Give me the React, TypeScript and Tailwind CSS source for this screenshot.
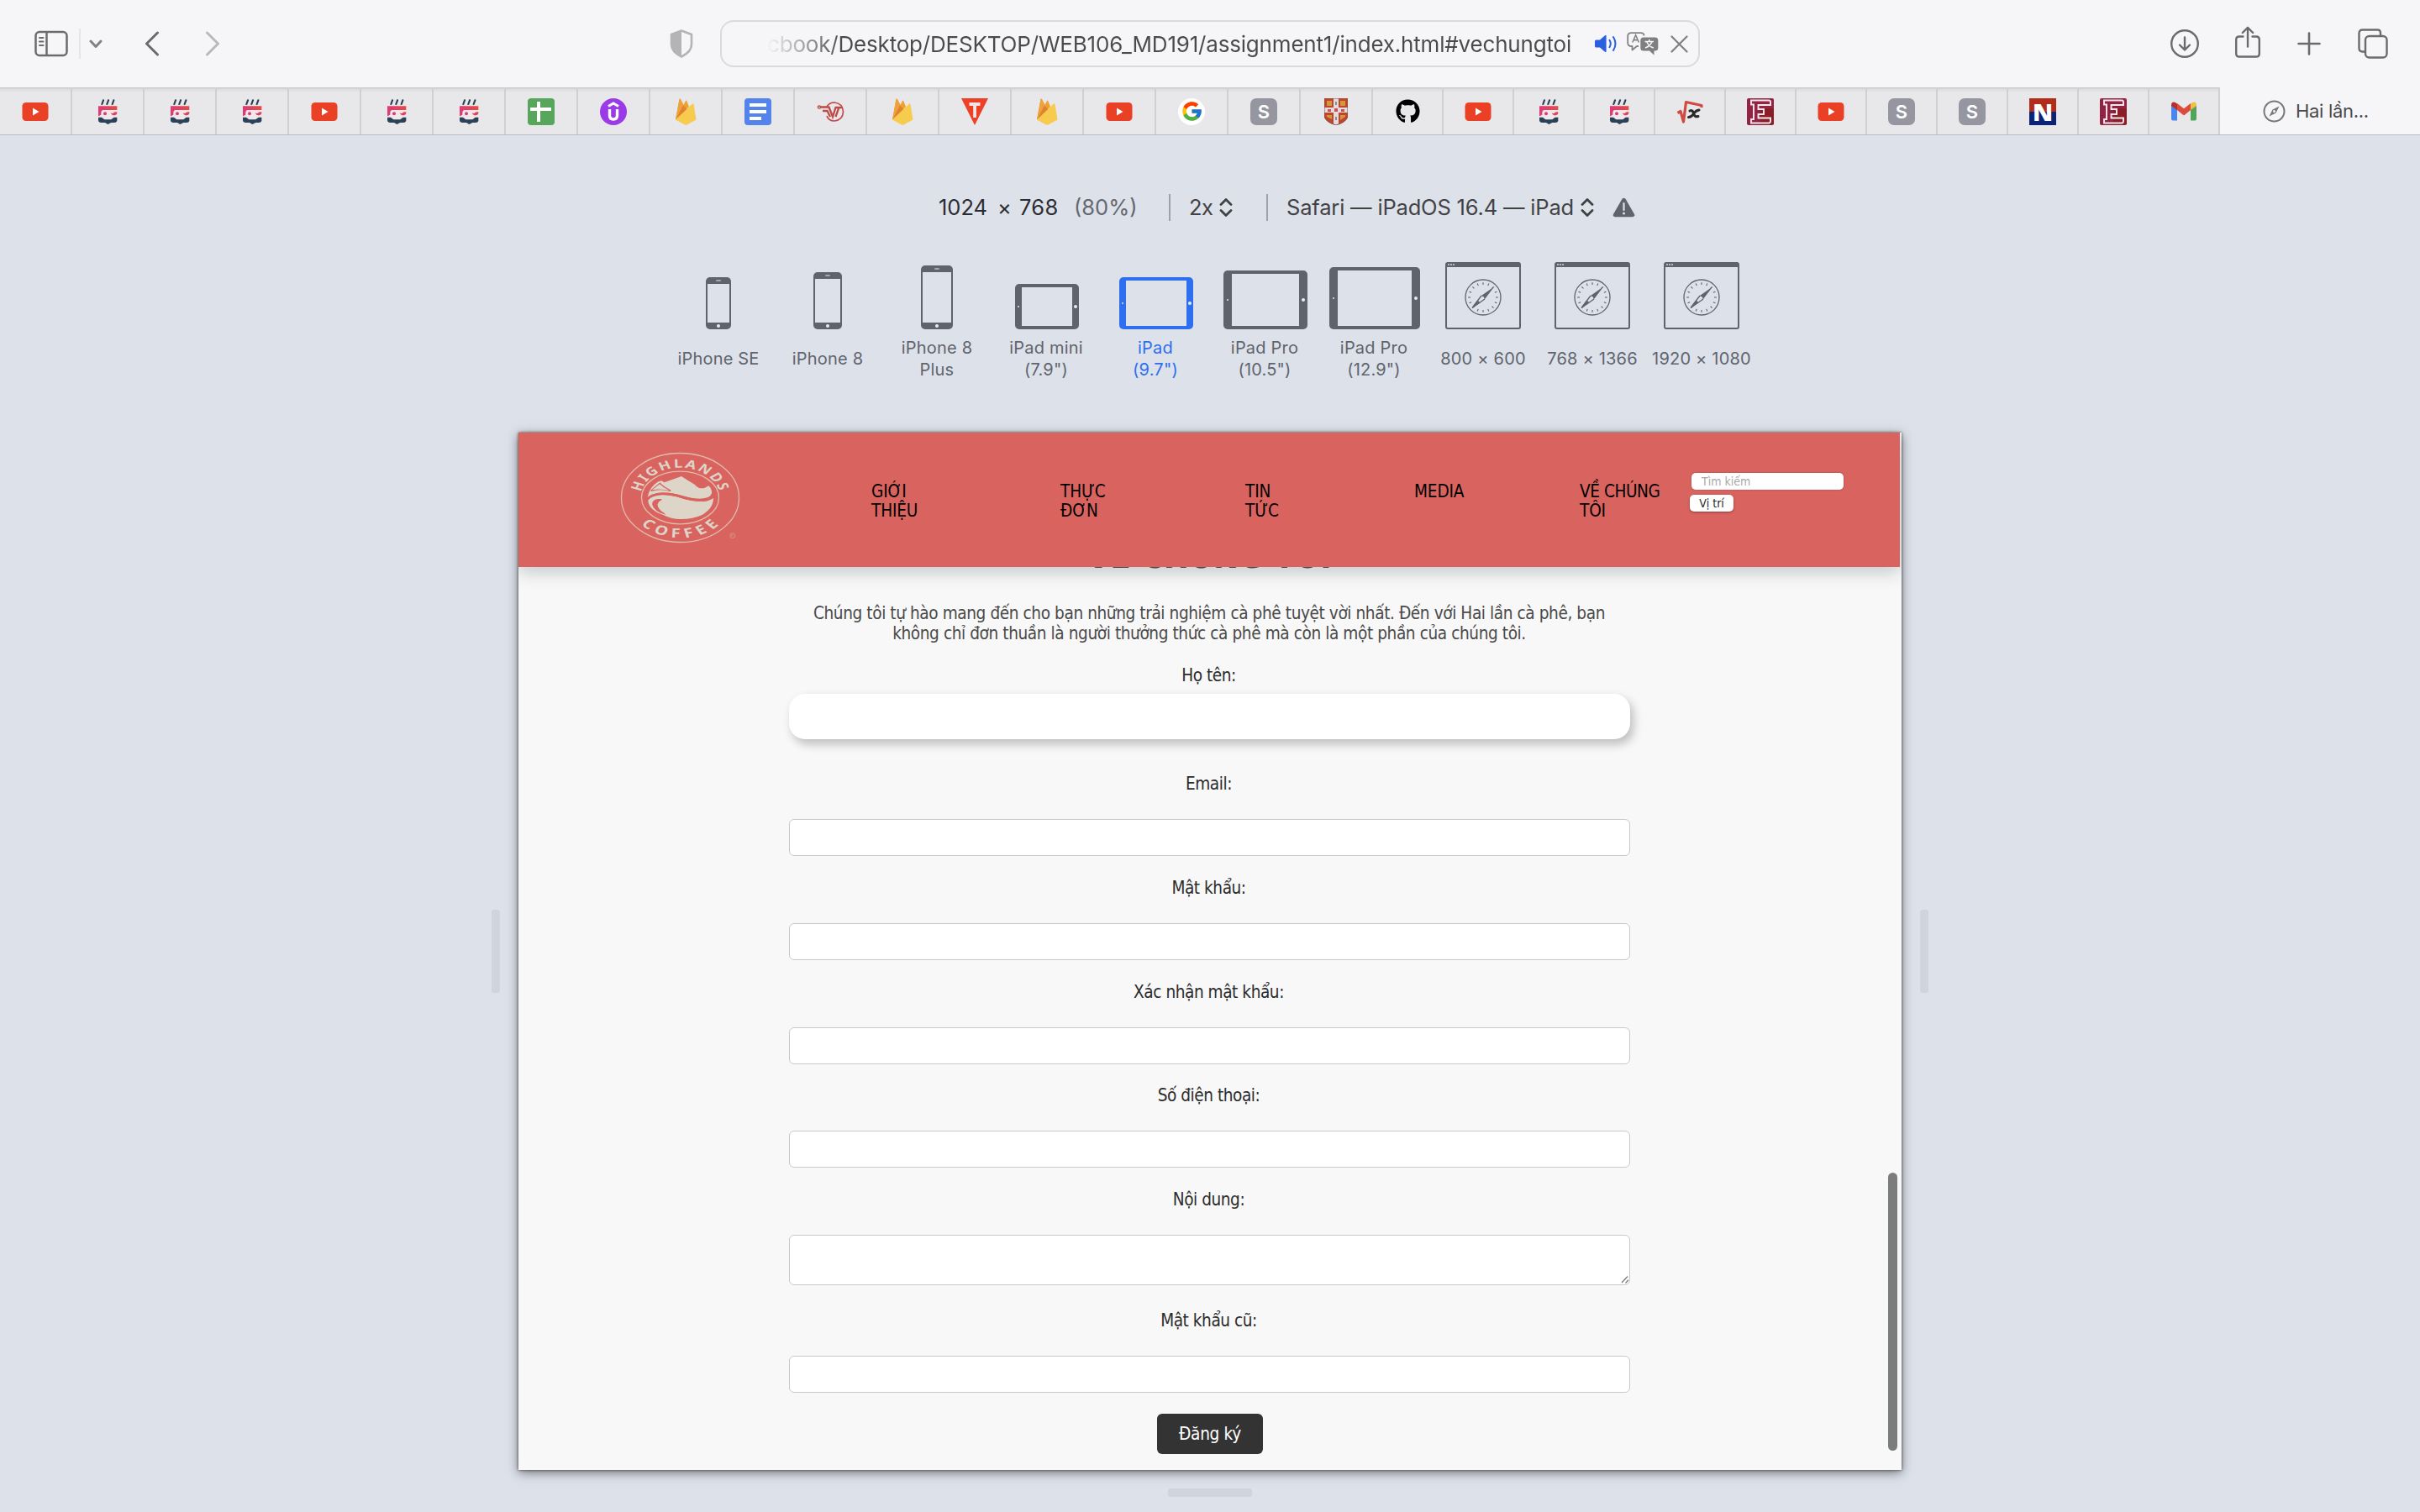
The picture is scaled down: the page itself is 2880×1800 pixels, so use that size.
import type { ReactNode } from "react";
import { FaGithub } from "react-icons/fa";
import { FcGoogle } from "react-icons/fc";

/* ---------- toolbar icons ---------- */

const SidebarIcon = () => (
  <svg width="40" height="32" viewBox="0 0 40 32" fill="none" stroke="#6b6b6e" strokeWidth="2.5">
    <rect x="1.5" y="2" width="37" height="28" rx="4.5" />
    <path d="M14.5 2v28" />
    <path d="M6 9h4.500M6 13.500h4.500M6 18h4.500" strokeWidth="2" strokeLinecap="round" />
  </svg>
);

const ShieldIcon = () => (
  <svg width="28" height="34" viewBox="0 0 28 34">
    <path d="M14 1.500 L26 6 V18 C26 25 20 29.500 14 32.500 C8 29.500 2 25 2 18 V6 Z" fill="none" stroke="#b4b4b7" strokeWidth="2.600" strokeLinejoin="round" />
    <path d="M14 1.500 L2 6 V18 C2 25 8 29.500 14 32.500 Z" fill="#b4b4b7" />
  </svg>
);

const AudioIcon = () => (
  <svg width="28" height="22" viewBox="0 0 28 22">
    <path d="M1 8 Q1 6.500 2.500 6.500 H7 L13 1.200 Q14.600 0.200 14.600 2 V20 Q14.600 21.800 13 20.800 L7 15.500 H2.500 Q1 15.500 1 14 Z" fill="#2a5fe0" />
    <path d="M18.500 6.800 Q21 11 18.500 15.200 M23 3 Q28 11 23 19" fill="none" stroke="#2a5fe0" strokeWidth="2" strokeLinecap="round" />
  </svg>
);

const TranslateIcon = () => (
  <svg width="38" height="28" viewBox="0 0 38 28">
    <path d="M14 17 H12 L6.500 21.500 V17 H5.500 Q1.200 17 1.200 13 V5 Q1.200 1.200 5.500 1.200 H16.500 Q20.500 1.200 20.500 4.500" fill="none" stroke="#838386" strokeWidth="1.800" strokeLinejoin="round" />
    <path d="M6.800 12.500 L10.600 3.800 L14.400 12.500 M8.200 9.600 H13" fill="none" stroke="#838386" strokeWidth="1.600" />
    <path d="M20 6.500 H33.500 Q37.300 6.500 37.300 10 V19 Q37.300 22.500 33.500 22.500 H32.500 V27.500 L27 22.500 H20 Q16.300 22.500 16.300 19 V10 Q16.300 6.500 20 6.500Z" fill="#7f7f82" />
    <path d="M21.500 11.500 H32 M26.800 9 V11.500 M30 11.500 Q28 17 22 19 M23.600 11.500 Q26 17 31.800 19" fill="none" stroke="#f6f6f8" strokeWidth="1.600" />
  </svg>
);

const DownloadIcon = () => (
  <svg width="36" height="36" viewBox="0 0 36 36" fill="none" stroke="#6b6b6e" strokeWidth="2.400" strokeLinecap="round" strokeLinejoin="round">
    <circle cx="18" cy="18" r="15.800" />
    <path d="M18 10.500v14.500M12 19.500l6 6 6-6" />
  </svg>
);

const ShareIcon = () => (
  <svg width="32" height="40" viewBox="0 0 32 40" fill="none" stroke="#6b6b6e" strokeWidth="2.400" strokeLinecap="round" strokeLinejoin="round">
    <path d="M10.500 13.500H6q-3.800 0-3.800 3.800v16.400q0 3.800 3.800 3.800h20q3.800 0 3.800-3.800V17.300q0-3.800-3.800-3.800h-4.500" />
    <path d="M16 25.500V3M9.800 9l6.200-6.200L22.200 9" />
  </svg>
);

const PlusIcon = () => (
  <svg width="28" height="28" viewBox="0 0 28 28" stroke="#6b6b6e" strokeWidth="2.600" strokeLinecap="round">
    <path d="M14 1.500v25M1.500 14h25" />
  </svg>
);

const TabsIcon = () => (
  <svg width="37" height="36" viewBox="0 0 37 36" fill="none" stroke="#6b6b6e" strokeWidth="2.400">
    <path d="M9.500 27.500H6.500q-4 0-4-4V5.500q0-4 4-4H24.500q3.500 0 3.500 4V8.500" />
    <rect x="10" y="9" width="25.500" height="25.500" rx="4.500" />
  </svg>
);

/* ---------- favicons ---------- */

const YouTube = () => (
  <svg width="32" height="32" viewBox="0 0 32 32">
    <rect x="0.500" y="5" width="31" height="22" rx="4.500" fill="#ea4025" />
    <path d="M13 11.500 L20.500 16 L13 20.500Z" fill="#fff" />
  </svg>
);

const Robot = () => (
  <svg width="24" height="30" viewBox="47 32 72 90">
    <defs>
      <linearGradient id="robot" gradientUnits="userSpaceOnUse" x1="50" x2="117" y1="0" y2="0">
        <stop offset="0" stopColor="#dd3a78" />
        <stop offset="1" stopColor="#e84a43" />
      </linearGradient>
    </defs>
    <path d="M68 36 L63 50 M86 36 L81 50 M105 36 L100 50" stroke="#2b4157" strokeWidth="6.500" strokeLinecap="round" />
    <path d="M56 70 H117 V96 L104 96 L96 103 H72 L64 96 H56Z" fill="#efe9ec" />
    <path d="M50 57 H117 V71 H66 Q60 72 60 80 V88 L50 93Z" fill="url(#robot)" />
    <circle cx="74" cy="84" r="6" fill="#dd3a78" />
    <path d="M94 80 q4 4 9 2 q4 -5 14 -4 q1 10 -8 12 q-12 1 -15 -10Z" fill="#e2435a" />
    <path d="M50 97 L62 97 L72 105 H96 L106 97 H117 V110 Q115 116 107 116 H96 L84 122 L74 116 H60 Q51 116 50 108Z" fill="#2b4157" />
  </svg>
);

const Sheet = () => (
  <div className="relative h-[32px] w-[32px] rounded-[4px] bg-[#58a65c]">
    <div className="absolute left-[3px] top-[11px] h-[4px] w-[25px] bg-white" />
    <div className="absolute left-[11px] top-[4px] h-[24px] w-[4px] bg-white" />
  </div>
);

const Udemy = () => (
  <svg width="32" height="32" viewBox="0 0 32 32">
    <circle cx="16" cy="16" r="16" fill="#9b3be8" />
    <path d="M10 9.500 L16 6 L22 9.500" fill="none" stroke="#fff" strokeWidth="3" />
    <path d="M11.500 13 V20.500 Q11.500 25 16 25 Q20.500 25 20.500 20.500 V13" fill="none" stroke="#fff" strokeWidth="3.400" />
  </svg>
);

const Firebase = () => (
  <svg width="26" height="32" viewBox="0 0 26 32">
    <path d="M1 25.500 L5.500 1 Q6 0 6.800 1 L10.500 8 L13 3 Q13.500 2.200 14.200 3 L17 10 L1 25.500Z" fill="#f0a030" />
    <path d="M1 25.500 L5.500 1 Q6 0 6.800 1 L14 14Z" fill="#eda23b" />
    <path d="M1 25.500 L10 8.500 L15.500 14Z" fill="#e08230" />
    <path d="M1 25.500 L21 6.500 Q22.200 5.800 22.500 7 L25.500 25.500 L14.500 31.500 Q13.200 32 12 31.500Z" fill="#f7cb4d" />
  </svg>
);

const Docs = () => (
  <div className="flex h-[32px] w-[32px] flex-col gap-[4px] rounded-[4px] bg-[#5383ec] pl-[6px] pt-[6px]">
    <div className="h-[4px] w-[20px] bg-white" />
    <div className="h-[4px] w-[20px] bg-white" />
    <div className="h-[4px] w-[14px] bg-white" />
  </div>
);

const Circuit = () => (
  <svg width="33" height="26" viewBox="0 0 33 26" fill="none" stroke="#bf4b48">
    <path d="M12 7 Q15 2 21 2 Q31 3 31.500 13 Q31 23 21 24 Q14 24 12 18" strokeWidth="1.700" />
    <circle cx="3" cy="7.500" r="1.600" strokeWidth="1.500" />
    <path d="M5 7.500 H14.500 L19 19 L22.500 8 H30 M7 12 H12.500 L16 19 M26 9 L22.500 19" strokeWidth="2.300" />
  </svg>
);

const TriangleT = () => (
  <svg width="32" height="32" viewBox="0 0 32 32">
    <path d="M0 0 H32 L16 32Z" fill="#ec4127" />
    <path d="M9.500 5 H22.500 V9 H18 V23 H14.200 V9 H9.500Z" fill="#f3e6e4" />
  </svg>
);

const Google = () => (
  <div className="flex h-[32px] w-[32px] items-center justify-center rounded-full bg-white">
    <FcGoogle size={27} />
  </div>
);

const LetterS = () => (
  <div className="flex h-[32px] w-[32px] items-center justify-center rounded-[7px] bg-[#9696a0] text-[22px] font-semibold leading-none text-white">
    S
  </div>
);

const Crest = () => (
  <svg width="28" height="32" viewBox="0 0 28 32">
    <path d="M0 0 H28 V20 Q28 28 14 32 Q0 28 0 20Z" fill="#c0442f" />
    <path d="M3 3 h6 v6 h-6z M19 3 h6 v6 h-6z M3 20 h6 v5 l-6 -3z M19 20 h6 v2 l-6 4z" fill="#cf9a35" />
    <path d="M11 0 h6 v32 h-6z M0 11 h28 v6 h-28z" fill="#e2dcdf" />
    <path d="M12 12 h4 v4 h-4z M4 13 h4 v3 h-4z M20 13 h4 v3 h-4z" fill="#d0504a" />
    <path d="M13 4 h2 v4 h-2z M13 22 h2 v4 h-2z" fill="#8f8a90" />
    <path d="M0 0 H28 V20 Q28 28 14 32 Q0 28 0 20Z" fill="none" stroke="#8c4a3c" strokeWidth="1" />
  </svg>
);

const Root = () => (
  <svg width="32" height="30" viewBox="0 0 32 30">
    <path d="M1.500 16.500 L5 14.500 L8.500 27 L11.500 3.500 L30 7.500 V10" fill="none" stroke="#cf4a40" strokeWidth="3.200" strokeLinejoin="round" />
    <path d="M16 14 Q19 12.500 20.500 16.500 Q21.500 22 26 20.500 M27 13 Q23 13.500 20.500 17.500 Q18 21.500 14.500 21.500" fill="none" stroke="#2a2a2a" strokeWidth="3" strokeLinecap="round" />
  </svg>
);

const LetterE = () => (
  <svg width="32" height="32" viewBox="0 0 32 32">
    <rect width="32" height="32" rx="2" fill="#932342" />
    <path d="M16 12 H32 V31 H16Z" fill="#8a1d26" />
    <path d="M5 2.500 H26 Q28 2.500 28 4.500 V8 H13.500 V13 H20 V19 H13.500 V23.500 H28 V27 Q28 29.500 26 29.500 H5 V25 H8 V7.500 H5Z" fill="none" stroke="#f5e9ec" strokeWidth="1.900" />
  </svg>
);

const LetterN = () => (
  <div className="flex h-[32px] w-[32px] items-center justify-center bg-[linear-gradient(#b12c1a_50%,#0b2478_50%)] font-['Open_Sans',sans-serif] text-[29px] font-extrabold leading-none text-white">
    N
  </div>
);

const Gmail = () => (
  <svg width="30" height="23" viewBox="0 0 30 23">
    <path d="M0 4 L7 9 V22.500 H2 Q0 22.500 0 20.500Z" fill="#4b85ee" />
    <path d="M30 4 L23 9 V22.500 H28 Q30 22.500 30 20.500Z" fill="#50a656" />
    <path d="M7 2 L15 8.300 L23 2 V10 L15 16.500 L7 10Z" fill="#dd4b3e" />
    <path d="M0 4 Q0 0.500 3 0.500 Q4.500 0.500 7 2.500 V10 L0 5Z" fill="#b8302a" />
    <path d="M30 4 Q30 0.500 27 0.500 Q25.500 0.500 23 2.500 V10 L30 5Z" fill="#f2bf42" />
  </svg>
);

const GitHub = () => <FaGithub size={29} color="#000" />;

const wideTabs = [YouTube, Robot, Robot, Robot, YouTube, Robot, Robot, Sheet, Udemy, Firebase, Docs, Circuit, Firebase, TriangleT, Firebase, YouTube, Google, LetterS, Crest];
const narrowTabs = [GitHub, YouTube, Robot, Robot, Root, LetterE, YouTube, LetterS, LetterS, LetterN, LetterE, Gmail];

const tabBase =
  "flex h-full shrink-0 items-center justify-center border-r-2 border-[#d0d0d3] bg-[linear-gradient(#c4c4c6,#dcdcde_2px,#e8e8ea_6px)] pt-px";

const Toolbar = () => (
  <div className="flex h-[104px] shrink-0 items-center bg-[#f6f6f8]">
    <div className="ml-[41px] flex items-center">
      <SidebarIcon />
    </div>
    <div className="ml-[13px] h-[36px] w-[2px] bg-[#e6e6e9]" />
    <svg className="ml-[10px]" width="16" height="11" viewBox="0 0 16 11" fill="none" stroke="#818188" strokeWidth="3" strokeLinecap="round" strokeLinejoin="round">
      <path d="M2 2 L8 8.500 L14 2" />
    </svg>
    <svg className="ml-[50px]" width="18" height="30" viewBox="0 0 18 30" fill="none" stroke="#6b6b6e" strokeWidth="3" strokeLinecap="round" strokeLinejoin="round">
      <path d="M15.500 2 L2.500 15 L15.500 28" />
    </svg>
    <svg className="ml-[54px]" width="18" height="30" viewBox="0 0 18 30" fill="none" stroke="#b9b9bb" strokeWidth="3" strokeLinecap="round" strokeLinejoin="round">
      <path d="M2.500 2 L15.500 15 L2.500 28" />
    </svg>
    <div className="ml-[535px]">
      <ShieldIcon />
    </div>
    <div className="ml-[32px] flex h-[56px] w-[1166px] items-center rounded-[16px] border-2 border-[#dadadc]">
      <span className="ml-[54px] mt-px w-[960px] whitespace-nowrap bg-[linear-gradient(90deg,#4a4a4c00_0,#4a4a4c_90px)] bg-clip-text text-[26px] leading-[40px] tracking-[-0.188px] text-transparent">
        cbook/Desktop/DESKTOP/WEB106_MD191/assignment1/index.html#vechungtoi
      </span>
      <div className="ml-[24px] flex items-center">
        <AudioIcon />
        <div className="ml-[11px]">
          <TranslateIcon />
        </div>
        <svg className="ml-[14px]" width="21" height="21" viewBox="0 0 21 21" stroke="#7f7f82" strokeWidth="2.200" strokeLinecap="round">
          <path d="M1.500 1.500 L19.500 19.500 M19.500 1.500 L1.500 19.500" />
        </svg>
      </div>
    </div>
    <div className="ml-[559px] flex items-center">
      <DownloadIcon />
      <div className="-mt-[5px] ml-[41px]">
        <ShareIcon />
      </div>
      <div className="ml-[43px]">
        <PlusIcon />
      </div>
      <div className="ml-[43px]">
        <TabsIcon />
      </div>
    </div>
  </div>
);

const TabBar = () => (
  <div className="flex h-[57px] shrink-0 border-b border-[#b7bcc6] bg-[#f6f6f8]">
    {wideTabs.map((Icon, i) => (
      <div key={i} className={`${tabBase} w-[86px]`}>
        <Icon />
      </div>
    ))}
    {narrowTabs.map((Icon, i) => (
      <div key={i} className={`${tabBase} w-[84px]`}>
        <Icon />
      </div>
    ))}
    <div className="flex items-center pl-[51px]">
      <svg width="27" height="27" viewBox="0 0 27 27">
        <circle cx="13.500" cy="13.500" r="12" fill="none" stroke="#77777a" strokeWidth="2" />
        <path d="M19.500 7.500 L15.500 15.500 L7.500 19.500 L11.500 11.500Z" fill="#77777a" />
        <circle cx="13.500" cy="13.500" r="1.500" fill="#f6f6f8" />
      </svg>
      <span className="ml-[12px] mt-px text-[22px] tracking-[-0.3px] text-[#4a4a4c]">Hai lần...</span>
    </div>
  </div>
);

/* ---------- responsive design mode bar ---------- */

const UpDown = () => (
  <svg width="16" height="24" viewBox="0 0 16 24" fill="none" stroke="#414143" strokeWidth="2.800" strokeLinecap="round" strokeLinejoin="round">
    <path d="M2 8.500 L8 2.500 L14 8.500 M2 15.500 L8 21.500 L14 15.500" />
  </svg>
);

const DimensionBar = () => (
  <div className="mt-[66px] flex h-[40px] items-center pl-[1117px] text-[25.5px] text-[#424245]">
    <span className="w-[70px] text-[#2b2c31]">1024</span>
    <span className="w-[26px] text-[#2b2c31]">×</span>
    <span className="w-[65px] tracking-[0.3px] text-[#2b2c31]">768</span>
    <span className="w-[113px] text-[25.5px] text-[#64676f]">(80%)</span>
    <div className="h-[32px] w-[2px] bg-[#9ea2ab]" />
    <span className="ml-[22px] w-[36px] tracking-[-0.5px]">2x</span>
    <UpDown />
    <div className="ml-[40px] h-[32px] w-[2px] bg-[#9ea2ab]" />
    <span className="ml-[22px] w-[350px] whitespace-nowrap tracking-[-0.18px]">Safari — iPadOS 16.4 — iPad</span>
    <UpDown />
    <svg className="ml-[22px]" width="27" height="24" viewBox="0 0 27 24">
      <path d="M11.500 1.800 Q13.500 -0.500 15.500 1.800 L26 20 Q27 23 24 23.300 H3 Q0 23 1 20Z" fill="#5f636c" />
      <path d="M13.500 7 V15" stroke="#dde1ea" strokeWidth="2.200" strokeLinecap="round" />
      <circle cx="13.500" cy="19" r="1.500" fill="#dde1ea" />
    </svg>
  </div>
);

const Phone = ({ size }: { size: string }) => (
  <div className={`flex flex-col items-center rounded-[5px] bg-[#5f636c] px-[2px] ${size}`}>
    <div className="flex h-[8px] items-center">
      <div className="h-[2px] w-[6px] rounded-full bg-[#a4a8b0]" />
    </div>
    <div className="w-full flex-1 bg-[#dde1ea]" />
    <div className="flex h-[8px] items-center">
      <div className="h-[4px] w-[4px] rounded-full bg-[#e8ebf2]" />
    </div>
  </div>
);

const Tablet = ({ size, color, side }: { size: string; color: string; side: string }) => (
  <div className={`ml-px flex rounded-[5px] py-[4px] ${size} ${color}`}>
    <div className={`flex items-center justify-center ${side}`}>
      <div className="h-[2px] w-[2px] bg-[#c2c6cf]" />
    </div>
    <div className="flex-1 bg-[#dde1ea]" />
    <div className={`flex items-center justify-center ${side}`}>
      <div className="h-[4px] w-[4px] rounded-full bg-[#e8ebf2]" />
    </div>
  </div>
);

const ticks = Array.from({ length: 16 }, (_, i) => i * 22.5);

const BrowserWindow = () => (
  <div className="flex h-[80px] w-[90px] flex-col rounded-[3px] border-2 border-t-0 border-[#5f636c]">
    <div className="flex h-[6px] items-center gap-[1px] bg-[#5f636c] pl-px">
      <div className="h-[2px] w-[2px] bg-[#b4b8c0]" />
      <div className="h-[2px] w-[2px] bg-[#b4b8c0]" />
      <div className="h-[2px] w-[2px] bg-[#b4b8c0]" />
    </div>
    <div className="flex flex-1 items-center justify-center">
      <svg width="44" height="44" viewBox="0 0 44 44" stroke="#5f636c">
        <circle cx="22" cy="22" r="21" fill="none" strokeWidth="1.300" />
        {ticks.map((a) => (
          <path key={a} d="M22 4.200 V7" strokeWidth="1.100" transform={`rotate(${a} 22 22)`} />
        ))}
        <path d="M35.500 9 L20 20 L24 24Z" fill="#5f636c" stroke="none" />
        <path d="M20 20 L9 34.500 L24 24" fill="none" strokeWidth="1.300" />
        <path d="M9 34.500 L15.500 25.500 L18.500 28.200Z" fill="#5f636c" stroke="none" />
        <circle cx="21.800" cy="22.200" r="1.300" fill="#dde1ea" stroke="none" />
      </svg>
    </div>
  </div>
);

const Device = ({ icon, lines, active }: { icon: ReactNode; lines: string[]; active?: boolean }) => (
  <div className={`flex w-[130px] flex-col items-center ${active ? "text-[#2d6fee]" : "text-[#60646d]"}`}>
    <div className="flex h-[82px] items-end">{icon}</div>
    <div className="mt-[9px] flex h-[52px] flex-col items-center justify-center text-[20px] leading-[26px] tracking-[0.2px]">
      {lines.map((line) => (
        <span key={line} className="whitespace-nowrap">{line}</span>
      ))}
    </div>
  </div>
);

const DeviceBar = () => (
  <div className="mt-[43px] flex pl-[790px]">
    <Device icon={<Phone size="h-[62px] w-[30px]" />} lines={["iPhone SE"]} />
    <Device icon={<Phone size="h-[68px] w-[34px]" />} lines={["iPhone 8"]} />
    <Device icon={<Phone size="h-[76px] w-[38px]" />} lines={["iPhone 8", "Plus"]} />
    <Device icon={<Tablet size="h-[54px] w-[76px]" side="w-[8px]" color="bg-[#5f636c]" />} lines={["iPad mini", '(7.9")']} />
    <Device active icon={<Tablet size="h-[62px] w-[88px]" side="w-[8px]" color="bg-[#2d6fee]" />} lines={["iPad", '(9.7")']} />
    <Device icon={<Tablet size="h-[70px] w-[100px]" side="w-[10px]" color="bg-[#5f636c]" />} lines={["iPad Pro", '(10.5")']} />
    <Device icon={<Tablet size="h-[74px] w-[108px]" side="w-[10px]" color="bg-[#5f636c]" />} lines={["iPad Pro", '(12.9")']} />
    <Device icon={<BrowserWindow />} lines={["800 × 600"]} />
    <Device icon={<BrowserWindow />} lines={["768 × 1366"]} />
    <Device icon={<BrowserWindow />} lines={["1920 × 1080"]} />
  </div>
);

/* ---------- the web page inside the viewport ---------- */

const Logo = () => (
  <svg width="160" height="125" viewBox="0 0 480 375" className="shrink-0">
    <defs>
      <path id="arc-top" d="M-106 18 A107.500 107.500 0 1 1 106 18" />
      <path id="arc-bottom" d="M-143 0 A143 143 0 0 0 143 0" />
    </defs>
    <ellipse cx="238.500" cy="187.500" rx="210" ry="159" fill="none" stroke="#e3b9ac" strokeWidth="4" />
    <ellipse cx="238.500" cy="187.500" rx="138" ry="94" fill="none" stroke="#e3b9ac" strokeWidth="4" />
    <g transform="translate(238.500 187.500) scale(1.320 1)" fill="#ddd5c8" fontFamily="'Noto Sans', sans-serif" fontWeight="700">
      <text fontSize="42" letterSpacing="5">
        <textPath href="#arc-top" startOffset="50%" textAnchor="middle">HIGHLANDS</textPath>
      </text>
      <text fontSize="46" letterSpacing="14">
        <textPath href="#arc-bottom" startOffset="51.5%" textAnchor="middle">COFFEE</textPath>
      </text>
    </g>
    <g fill="#ddd5c8">
      <path d="M122 186 Q128 150 160 130 L172 127 L182 133 L243 111 Q262 124 290 140 Q305 158 325 153 L340 145 Q352 155 351 172 Q345 188 322 190 Q290 194 245 180 Q190 164 150 174 Q132 178 122 186Z" />
      <path d="M124 200 Q124 182 150 179 Q190 172 240 188 Q290 204 330 200 Q350 196 357 187 Q358 225 318 248 Q285 264 240 264 Q205 264 180 250 Q128 232 124 200Z" />
    </g>
    <g fill="none" stroke="#d9635f">
      <path d="M134 163 L166 137 Q178 150 204 163 Q166 152 134 163" strokeWidth="5" />
      <path d="M172 194 Q138 190 140 212 Q146 236 184 246 Q156 228 156 212 Q158 200 172 194Z" fill="#d9635f" strokeWidth="3" />
      <path d="M122 192 Q134 178 165 174 Q200 171 244 185 Q292 200 330 195 Q348 191 357 182" strokeWidth="9" />
    </g>
    <path d="M138 160 L165 139 Q178 152 200 162 Q168 154 138 160Z" fill="#ddd5c8" />
    <circle cx="425" cy="323" r="9" fill="none" stroke="#d99a90" strokeWidth="2.500" />
    <text x="420" y="328" fontSize="13" fill="#d99a90">R</text>
  </svg>
);

const navItems: [string, string[]][] = [
  ["w-[225px]", ["GIỚI", "THIỆU"]],
  ["w-[220px]", ["THỰC", "ĐƠN"]],
  ["w-[201px]", ["TIN", "TỨC"]],
  ["w-[197px]", ["MEDIA"]],
  ["w-[131px]", ["VỀ CHÚNG", "TÔI"]],
];

const SiteHeader = () => (
  <header className="relative z-10 flex h-[160px] w-[1644px] shrink-0 bg-[#d9635f] shadow-[0_6px_20px_rgba(0,30,30,0.22)]">
    <div className="ml-[113px] mt-[15px] w-[307px]">
      <Logo />
    </div>
    <nav className="mt-[58.5px] flex text-[20.6px] leading-[23.6px] tracking-[-0.15px] text-black">
      {navItems.map(([width, lines]) => (
        <a key={lines[0]} className={`flex flex-col ${width}`}>
          {lines.map((line) => (
            <span key={line} className={`whitespace-nowrap ${line === "VỀ CHÚNG" ? "tracking-[-0.45px]" : ""}`}>{line}</span>
          ))}
        </a>
      ))}
    </nav>
    <div className="mt-[48px] flex flex-col items-start text-[14px] leading-[20px]">
      <div className="ml-[2px] h-[20px] w-[181px] rounded-[5px] bg-white pl-[12px] leading-[21px] text-[#a9a9a9] shadow-[0_0_2px_rgba(0,0,0,0.3)]">
        Tìm kiếm
      </div>
      <button className="mt-[6px] h-[20px] w-[52px] rounded-[5px] bg-white text-center leading-[21px] text-[#262626] shadow-[0_1px_3px_rgba(0,0,0,0.35)]">
        Vị trí
      </button>
    </div>
  </header>
);

const Label = ({ children, className }: { children: ReactNode; className: string }) => (
  <label className={`block h-[24px] pr-[2px] text-center leading-[24px] tracking-[-0.45px] text-[#2c2c2c] ${className}`}>{children}</label>
);

const inputBase = "mt-[30px] w-full rounded-[6px] border-[1.5px] border-[#c9c9c9] bg-white";

const SignUpForm = () => (
  <div className="ml-[322px] flex w-[1001px] flex-col">
    <Label className="mt-[25.4px]">Họ tên:</Label>
    <div className="mt-[10px] h-[54px] rounded-[19px] bg-white shadow-[4px_6px_12px_rgba(0,0,0,0.24)]" />
    <Label className="mt-[41px]">Email:</Label>
    <div className={`h-[44px] ${inputBase}`} />
    {["Mật khẩu:", "Xác nhận mật khẩu:", "Số điện thoại:"].map((text) => (
      <div key={text}>
        <Label className="mt-[25.8px]">{text}</Label>
        <div className={`h-[44px] ${inputBase}`} />
      </div>
    ))}
    <Label className="mt-[25.8px]">Nội dung:</Label>
    <div className={`flex h-[60px] items-end justify-end ${inputBase}`}>
      <svg width="10" height="10" viewBox="0 0 10 10" stroke="#777" strokeWidth="1.300">
        <path d="M1 8 L8 0.500 M5.500 8.500 L9 4.800" />
      </svg>
    </div>
    <Label className="mt-[30px]">Mật khẩu cũ:</Label>
    <div className={`h-[44px] ${inputBase}`} />
    <button className="ml-[438px] mt-[25px] h-[48px] w-[126px] rounded-[6px] bg-[#333] text-center leading-[48px] tracking-[-0.3px] text-white">
      Đăng ký
    </button>
  </div>
);

const Viewport = () => (
  <div className="relative ml-[22px] flex h-[1235px] w-[1646px] shrink-0 flex-col overflow-hidden bg-[#f8f8f8] font-['DejaVu_Sans_Condensed','DejaVu_Sans',sans-serif] text-[20.6px] shadow-[0_3px_12px_rgba(0,0,0,0.5),0_0_3px_rgba(0,0,0,0.6)]">
    <SiteHeader />
    <section className="-mt-[36px] flex flex-col text-center">
      <h2 className="h-[46px] pr-[2px] text-[40px] font-bold leading-[46px] text-[#555]">VỀ CHÚNG TÔI</h2>
      <p className="mt-[33px] pr-[2px] leading-[24.3px] tracking-[-0.41px] text-[#4a4a4a]">
        Chúng tôi tự hào mang đến cho bạn những trải nghiệm cà phê tuyệt vời nhất. Đến với Hai lần cà phê, bạn
        <br />
        không chỉ đơn thuần là người thưởng thức cà phê mà còn là một phần của chúng tôi.
      </p>
      <SignUpForm />
    </section>
    <div className="absolute right-[5px] top-[881px] h-[331px] w-[11px] rounded-full bg-[#7b7d7d]" />
  </div>
);

export default function App() {
  return (
    <div className="flex h-[1800px] w-[2880px] flex-col overflow-hidden bg-[#dde1ea] font-['Inter',sans-serif]">
      <Toolbar />
      <TabBar />
      <DimensionBar />
      <DeviceBar />
      <div className="mt-[62px] flex pl-[585px]">
        <div className="mt-[568px] h-[99px] w-[10px] rounded-[3px] bg-[#d0d4dd]" />
        <Viewport />
        <div className="ml-[22px] mt-[568px] h-[99px] w-[10px] rounded-[3px] bg-[#d0d4dd]" />
      </div>
      <div className="ml-[1390px] mt-[22px] h-[10px] w-[100px] shrink-0 rounded-[3px] bg-[#d0d4dd]" />
    </div>
  );
}
